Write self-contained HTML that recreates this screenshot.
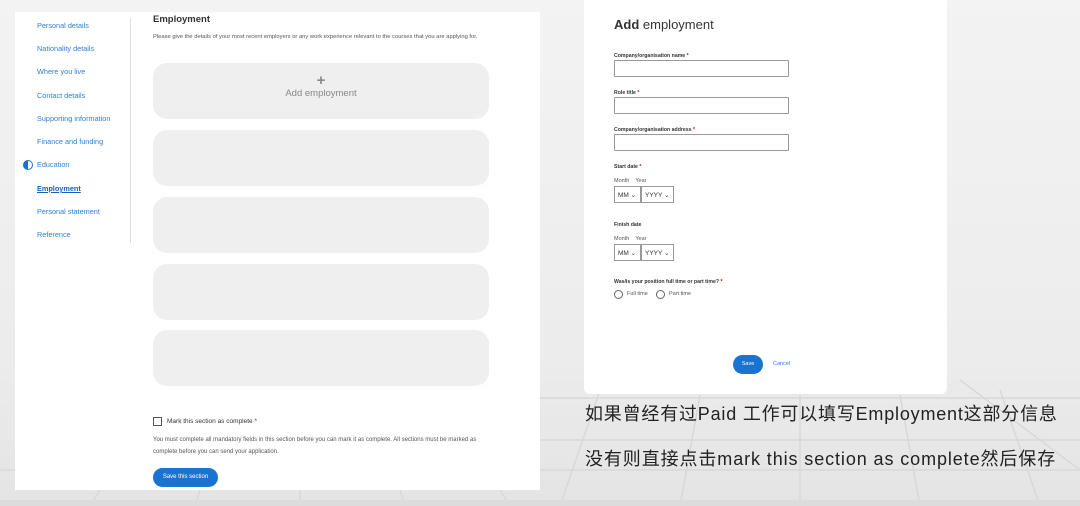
<!DOCTYPE html>
<html><head><meta charset="utf-8"><style>
*{margin:0;padding:0;box-sizing:border-box}
body{width:1080px;height:506px;overflow:hidden;position:relative;font-family:"Liberation Sans",Arial,sans-serif;background:linear-gradient(#f3f3f3,#ececec 70%,#e4e4e4);}
.abs{position:absolute}
.left{left:15px;top:12px;width:525px;height:478px;background:#fff;}
.nav a{position:absolute;left:22px;font-size:7.3px;color:#2f80d6;text-decoration:none}
.card{position:absolute;left:138px;width:336px;height:56px;background:#efefef;border-radius:14px}
.modal{left:584px;top:0;width:363px;height:394px;background:#fff;border-radius:0 0 6px 6px}
.lbl{position:absolute;left:30px;font-size:5.2px;font-weight:bold;color:#333}
.lbl i{color:#d00;font-style:normal}
.inp{position:absolute;left:30px;width:175px;height:17px;border:1px solid #999;border-radius:1px}
.sel{position:absolute;height:17px;border:1px solid #999;font-size:6.5px;color:#333;padding:4px 3px}
.cn{position:absolute;left:585px;font-family:"Liberation Sans","Noto Sans CJK SC",sans-serif;font-size:18px;color:#222;white-space:nowrap}
</style></head><body>
<svg class="abs" style="left:0;top:0" width="1080" height="506">
<g stroke="#d8d8d8" stroke-width="1.5">
<line x1="0" y1="470" x2="1080" y2="470"/><line x1="540" y1="440" x2="1080" y2="440"/><line x1="540" y1="398" x2="1080" y2="398"/>
<line x1="600" y1="390" x2="560" y2="506"/><line x1="700" y1="395" x2="680" y2="506"/><line x1="800" y1="395" x2="800" y2="506"/><line x1="900" y1="395" x2="920" y2="506"/><line x1="1000" y1="390" x2="1040" y2="506"/><line x1="960" y1="380" x2="1080" y2="470"/>
<line x1="100" y1="490" x2="90" y2="506"/><line x1="200" y1="490" x2="195" y2="506"/><line x1="300" y1="490" x2="300" y2="506"/><line x1="400" y1="490" x2="405" y2="506"/><line x1="500" y1="490" x2="510" y2="506"/>
</g>
<rect x="0" y="500" width="1080" height="6" fill="#dcdcdc"/>
</svg>
<div class="abs left">
<div class="nav">
<a style="top:9px">Personal details</a><a style="top:32px">Nationality details</a><a style="top:55px">Where you live</a><a style="top:79px">Contact details</a><a style="top:102px">Supporting information</a><a style="top:125px">Finance and funding</a>
<a style="top:148px">Education</a>
<div class="abs" style="left:8px;top:148px;width:10px;height:10px;border-radius:50%;border:1.5px solid #1a73d0;background:linear-gradient(90deg,#1a73d0 50%,#fff 50%)"></div>
<a style="top:172px;font-weight:bold;color:#1a5fb4;text-decoration:underline">Employment</a><a style="top:195px">Personal statement</a><a style="top:218px">Reference</a>
</div>
<div class="abs" style="left:115px;top:6px;width:1px;height:225px;background:#ddd"></div>
<div class="abs" style="left:138px;top:2px;font-size:9.5px;font-weight:bold;color:#333">Employment</div>
<div class="abs" style="left:138px;top:19px;width:340px;font-size:5.8px;line-height:12px;color:#555">Please give the details of your most recent employers or any work experience relevant to the courses that you are applying for.</div>
<div class="card" style="top:51px;text-align:center;color:#888"><div style="font-size:15px;margin-top:12px;line-height:12px;font-weight:bold">+</div><div style="font-size:9.5px;margin-top:1px">Add employment</div></div>
<div class="card" style="top:118px"></div><div class="card" style="top:185px"></div><div class="card" style="top:252px"></div><div class="card" style="top:318px"></div>
<div class="abs" style="left:138px;top:405px;width:9px;height:9px;border:1px solid #555"></div>
<div class="abs" style="left:152px;top:406px;font-size:6.5px;color:#333">Mark this section as complete <span style="color:#d00">*</span></div>
<div class="abs" style="left:138px;top:422px;width:330px;font-size:6px;line-height:12px;color:#555">You must complete all mandatory fields in this section before you can mark it as complete. All sections must be marked as complete before you can send your application.</div>
<div class="abs" style="left:138px;top:456px;width:65px;height:19px;background:#1a73d0;border-radius:10px;color:#fff;font-size:6px;text-align:center;line-height:19px">Save this section</div>
</div>
<div class="abs modal">
<div class="abs" style="left:30px;top:17px;font-size:13px;color:#333"><b>Add</b> employment</div>
<div class="lbl" style="top:53px">Company/organisation name <i>*</i></div><div class="inp" style="top:60px"></div>
<div class="lbl" style="top:90px">Role title <i>*</i></div><div class="inp" style="top:97px"></div>
<div class="lbl" style="top:127px">Company/organisation address <i>*</i></div><div class="inp" style="top:134px"></div>
<div class="lbl" style="top:164px">Start date <i>*</i></div>
<div class="abs" style="left:30px;top:178px;font-size:5.5px;color:#555">Month &nbsp;&nbsp;&nbsp;Year</div>
<div class="sel" style="left:30px;top:186px;width:27px">MM ⌄</div><div class="sel" style="left:57px;top:186px;width:33px">YYYY ⌄</div>
<div class="lbl" style="top:222px">Finish date</div>
<div class="abs" style="left:30px;top:236px;font-size:5.5px;color:#555">Month &nbsp;&nbsp;&nbsp;Year</div>
<div class="sel" style="left:30px;top:244px;width:27px">MM ⌄</div><div class="sel" style="left:57px;top:244px;width:33px">YYYY ⌄</div>
<div class="lbl" style="top:279px">Was/is your position full time or part time? <i>*</i></div>
<div class="abs" style="left:30px;top:290px;width:9px;height:9px;border-radius:50%;border:1px solid #666"></div>
<div class="abs" style="left:43px;top:291px;font-size:5.5px;color:#555">Full time</div>
<div class="abs" style="left:72px;top:290px;width:9px;height:9px;border-radius:50%;border:1px solid #666"></div>
<div class="abs" style="left:85px;top:291px;font-size:5.5px;color:#555">Part time</div>
<div class="abs" style="left:149px;top:355px;width:30px;height:19px;background:#1a73d0;border-radius:10px;color:#fff;font-size:5.5px;text-align:center;line-height:19px">Save</div>
<div class="abs" style="left:189px;top:361px;font-size:5.5px;color:#2f80d6">Cancel</div>
</div>
<div class="cn" style="top:400px;letter-spacing:0.8px">如果曾经有过Paid 工作可以填写Employment这部分信息</div>
<div class="cn" style="top:445px;letter-spacing:0.9px">没有则直接点击mark this section as complete然后保存</div>
</body></html>
